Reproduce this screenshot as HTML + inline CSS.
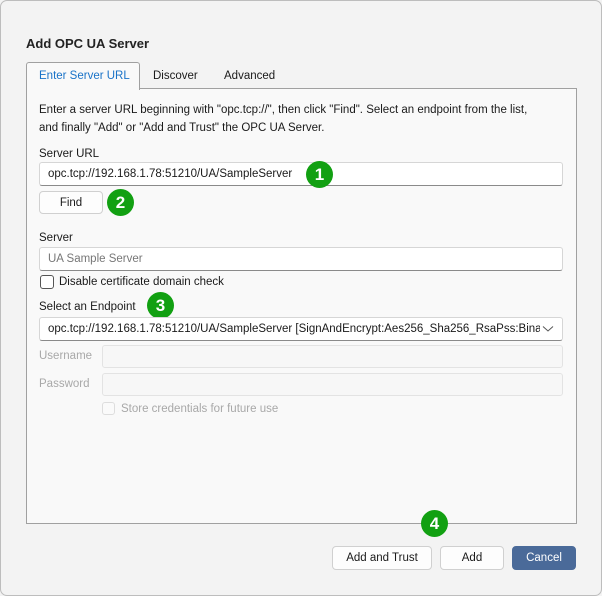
<!DOCTYPE html>
<html><head><meta charset="utf-8"><style>
*{box-sizing:border-box;margin:0;padding:0}
body{width:602px;height:596px;background:#f3f3f3;font-family:"Liberation Sans",sans-serif;font-size:11.5px;color:#1a1a1a;position:relative;overflow:hidden}
.win{position:absolute;left:0;top:0;width:602px;height:596px;border:1px solid #bdbdbd;border-radius:7px}
.a{position:absolute;white-space:nowrap}
.inp{position:absolute;background:#fff;border:1px solid #d6d6d6;border-bottom:1px solid #8a8a8a;border-radius:3px;padding-left:8px;line-height:22px;overflow:hidden;white-space:nowrap}
.dis{background:#f7f7f7;border:1px solid #e3e3e3;border-radius:3px;position:absolute}
.btn{position:absolute;background:#fdfdfd;border:1px solid #d0d0d0;border-radius:4px;text-align:center;line-height:22px}
.b{position:absolute;width:27px;height:27px;border-radius:50%;background:#12a012;color:#fff;font-size:17px;font-weight:bold;text-align:center;line-height:27px}
.g{color:#a8a8a8}
</style></head><body><div class="win"></div>
<div class="a" style="left:26px;top:36px;font-size:13px;font-weight:bold;color:#222">Add OPC UA Server</div>
<div style="position:absolute;left:26px;top:88px;width:551px;height:436px;background:#f9f9f9;border:1px solid #a0a0a0"></div>
<div style="position:absolute;left:26px;top:62px;width:114px;height:28px;background:#f9f9f9;border:1px solid #a0a0a0;border-bottom:none;border-radius:3px 3px 0 0"></div>
<div class="a" style="left:39px;top:70px;color:#1a73c8">Enter Server URL</div>
<div class="a" style="left:153px;top:70px">Discover</div>
<div class="a" style="left:224px;top:70px">Advanced</div>
<div class="a" style="left:39px;top:101px;line-height:18px">Enter a server URL beginning with "opc.tcp://", then click "Find". Select an endpoint from the list,<br>and finally "Add" or "Add and Trust" the OPC UA Server.</div>
<div class="a" style="left:39px;top:148px">Server URL</div>
<div class="inp" style="left:39px;top:162px;width:524px;height:24px">opc.tcp://192.168.1.78:51210/UA/SampleServer</div>
<div class="b" style="left:306px;top:161px">1</div>
<div class="btn" style="left:39px;top:191px;width:64px;height:23px">Find</div>
<div class="b" style="left:107px;top:189px">2</div>
<div class="a" style="left:39px;top:232px">Server</div>
<div class="inp g" style="left:39px;top:247px;width:524px;height:24px;color:#777">UA Sample Server</div>
<div style="position:absolute;left:40px;top:275px;width:14px;height:14px;border:1px solid #555;border-radius:3px;background:#fff"></div>
<div class="a" style="left:59px;top:276px">Disable certificate domain check</div>
<div class="a" style="left:39px;top:301px">Select an Endpoint</div>
<div class="b" style="left:147px;top:292px">3</div>
<div class="inp" style="left:39px;top:317px;width:524px;height:24px;padding-right:24px">opc.tcp://192.168.1.78:51210/UA/SampleServer [SignAndEncrypt:Aes256_Sha256_RsaPss:Bina</div>
<div style="position:absolute;left:540px;top:319px;width:22px;height:20px;background:#fff"></div>
<svg style="position:absolute;left:542px;top:325px" width="12" height="8"><path d="M1 1.5L6 6L11 1.5" fill="none" stroke="#555" stroke-width="1"/></svg>
<div class="a g" style="left:39px;top:350px">Username</div>
<div class="dis" style="left:102px;top:345px;width:461px;height:23px"></div>
<div class="a g" style="left:39px;top:378px">Password</div>
<div class="dis" style="left:102px;top:373px;width:461px;height:23px"></div>
<div style="position:absolute;left:102px;top:402px;width:13px;height:13px;border:1px solid #ddd;border-radius:3px;background:#fafafa"></div>
<div class="a g" style="left:121px;top:403px">Store credentials for future use</div>
<div class="b" style="left:421px;top:510px">4</div>
<div class="btn" style="left:332px;top:546px;width:100px;height:24px">Add and Trust</div>
<div class="btn" style="left:440px;top:546px;width:64px;height:24px">Add</div>
<div class="btn" style="left:512px;top:546px;width:64px;height:24px;background:#4a6a99;border-color:#4a6a99;color:#fff">Cancel</div>
</body></html>
